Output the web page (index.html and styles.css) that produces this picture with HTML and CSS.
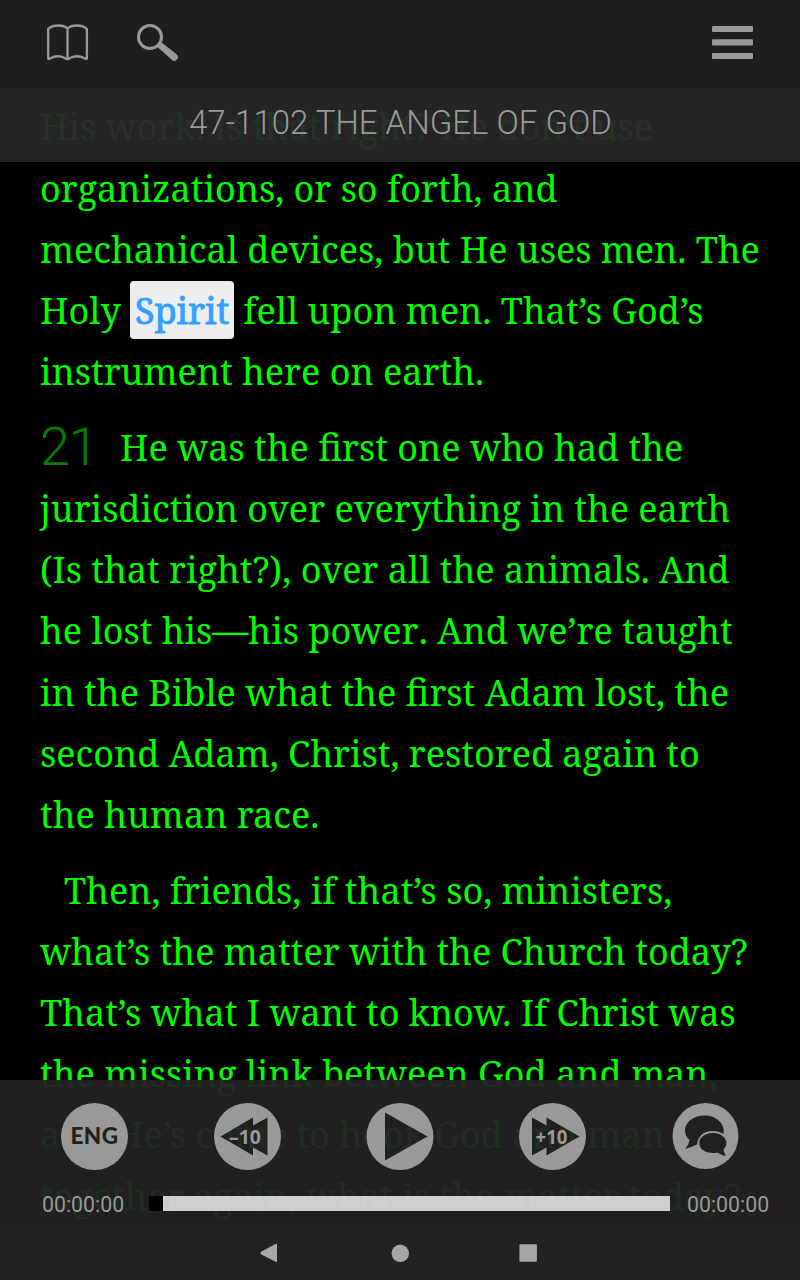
FILE: index.html
```html
<!DOCTYPE html>
<html lang="en">
<head>
    <meta charset="UTF-8">
    <meta name="viewport" content="width=device-width, initial-scale=1.0">
    <title>47-1102 The Angel Of God</title>
    <link rel="stylesheet" href="styles.css">
</head>
<body>
    <main class="reader">
        <p>
            <span class="line">His work. Is that right? He don’t use</span>
            <span class="line">organizations, or so forth, and</span>
            <span class="line">mechanical devices, but He uses men. The</span>
            <span class="line">Holy <mark>Spirit</mark> fell upon men. That’s God’s</span>
            <span class="line">instrument here on earth.</span>
        </p>
        <p>
            <span class="line"><span class="number">21</span>He was the first one who had the</span>
            <span class="line">jurisdiction over everything in the earth</span>
            <span class="line">(Is that right?)<span class="stop">,</span> over all the animals. And</span>
            <span class="line">he lost his—his power<span class="stop">.</span> And we’re taught</span>
            <span class="line">in the Bible what the first Adam lost, the</span>
            <span class="line">second Adam, Christ, restored again to</span>
            <span class="line">the human race.</span>
        </p>
        <p>
            <span class="line indent">Then, friends, if that’s so, ministers,</span>
            <span class="line">what’s the matter with the Church today?</span>
            <span class="line">That’s what I want to know. If Christ was</span>
            <span class="line">the missing link between God and man,</span>
            <span class="line">and He’s come to hook God and man</span>
            <span class="line">together again, what is the matter today?</span>
        </p>
    </main>

    <header class="top">
        <nav class="toolbar">
            <svg class="book" width="42" height="37" viewBox="0 0 42 37">
                <path d="M20.500 4.500C16.500 .6 6 .2 1.200 5V34.500Q2 35.500 3.500 34.200Q10.500 30.500 17.500 33.800Q20.500 36.500 23.500 33.800Q30.500 30.500 37.500 34.200Q39 35.500 39.900 34.500V5C35 .2 24.500 .6 20.500 4.500V34.500"/>
            </svg>
            <svg class="search" width="42" height="38" viewBox="0 0 42 38">
                <circle cx="13" cy="13" r="11.500"/>
                <path d="M20 22.500L24 18L39.600 30.300Q42 32.500 40.500 35Q38 38 35.300 36.300Z"/>
            </svg>
            <svg class="menu" width="41" height="33" viewBox="0 0 41 33">
                <rect width="41" height="6" rx="1"/>
                <rect y="13.300" width="41" height="6.200" rx="1"/>
                <rect y="27" width="41" height="6" rx="1"/>
            </svg>
        </nav>
        <h1 class="title">47-1102 THE ANGEL OF GOD</h1>
    </header>

    <footer class="bottom">
        <div class="player">
            <div class="buttons">
                <div class="lang">ENG</div>
                <svg width="68" height="68" viewBox="0 0 68 68">
                    <path fill-rule="evenodd" d="M34.500 1A33.500 33.500 0 1 1 34.500 68A33.500 33.500 0 1 1 34.500 1ZM7.500 34.500L40 15.500V23.500L54.500 15.500V53.500L40 45.500V53.500Z"/>
                    <text x="16" y="41.500" textLength="32" lengthAdjust="spacingAndGlyphs">–10</text>
                </svg>
                <svg width="68" height="68" viewBox="0 0 68 68">
                    <path fill-rule="evenodd" d="M34 1A33.500 33.500 0 1 1 34 68A33.500 33.500 0 1 1 34 1ZM19 10.500V58.500L61.500 34.500Z"/>
                </svg>
                <svg width="68" height="68" viewBox="0 0 68 68">
                    <path fill-rule="evenodd" d="M34.500 1A33.500 33.500 0 1 1 34.500 68A33.500 33.500 0 1 1 34.500 1ZM61.500 34.500L28.500 15.500V23.500L14 15.500V53.500L28.500 45.500V53.500Z"/>
                    <text x="17.500" y="41.500" textLength="32" lengthAdjust="spacingAndGlyphs">+10</text>
                </svg>
                <svg width="68" height="68" viewBox="0 0 68 68">
                    <circle cx="34.500" cy="34" r="33"/>
                    <path class="bubble" d="M33.500 13.500C22 13.500 14 20.500 14 28.500Q14 34.500 18.500 38Q18 42.500 14 47Q21 45 26 42.500C27 34 33 29 41 29Q48 29 52.500 32C54.500 21 44.500 13.500 33.500 13.500Z"/>
                    <path class="bubble" d="M41.500 31C34 31 28.300 35.500 28.300 41C28.300 48.500 37 52.500 46.500 50.500Q49.500 53 55 54Q53 51 52.500 47.500C59.500 40.500 53.500 31 41.500 31Z"/>
                </svg>
            </div>
            <div class="progress">
                <span class="time">00:00:00</span>
                <div class="track"><div class="thumb"></div></div>
                <span class="time">00:00:00</span>
            </div>
        </div>
        <div class="system">
            <svg width="20" height="20" viewBox="0 0 20 20"><path d="M.5 10Q.5 9 1.500 8.500L15.500 .9Q17 .3 17 1.500V18Q17 19.500 15.500 18.800L1.500 11.500Q.5 11 .5 10Z"/></svg>
            <svg width="18" height="18" viewBox="0 0 18 18"><circle cx="9.300" cy="9.300" r="8.700"/></svg>
            <svg width="18" height="18" viewBox="0 0 18 18"><rect x=".4" y=".3" width="17.500" height="17.500" rx="1"/></svg>
        </div>
    </footer>
</body>
</html>
```

FILE: styles.css
```css
* {
    box-sizing: border-box;
}

body {
    margin: 0;
    height: 1280px;
    overflow: hidden;
    background-color: #000;
    position: relative;
}

.reader {
    padding: 96.4px 0 0 40px;
    color: #00ff00;
    font-family: "Noto Serif", "Droid Serif", "DejaVu Serif Condensed", "DejaVu Serif", serif;
    font-size: 36px;
    line-height: 61.14px;
}

.reader p {
    margin: 0 0 15px;
}

.line {
    display: block;
    height: 61.14px;
    white-space: nowrap;
}

.indent {
    padding-left: 24px;
}

.number {
    display: inline-block;
    width: 80px;
    color: #008000;
    font: 300 54px/50px Roboto, sans-serif;
    letter-spacing: -1.5px;
    vertical-align: -3.5px;
}

/* No kerning before the punctuation */
.stop {
    margin-left: 0.3px;
}

mark {
    padding: 5px 4.7px 4px;
    border-radius: 4px;
    background-color: #ededed;
    color: #33a0ff;
    -webkit-text-stroke: 0.9px #33a0ff;
}

/* Bars above the text */
.top {
    position: absolute;
    top: 0;
    left: 0;
    width: 100%;
}

.toolbar {
    display: flex;
    align-items: flex-start;
    height: 88px;
    padding: 24px 47px;
    background-color: #1e1e1e;
}

.toolbar svg {
    fill: #999;
}

.toolbar .book {
    fill: none;
    stroke: #999;
    stroke-width: 2.3;
}

.search {
    margin-left: 48px;
}

.search circle {
    fill: none;
    stroke: #999;
    stroke-width: 3;
}

.menu {
    margin: 2px 0 0 auto;
}

.title {
    height: 74px;
    margin: 0;
    padding-left: 1px;
    background-color: rgba(39, 39, 39, 0.95);
    color: #999;
    font: 300 33px/69px Roboto, sans-serif;
    text-align: center;
}

.bottom {
    position: absolute;
    bottom: 0;
    left: 0;
    width: 100%;
}

.player {
    height: 146px;
    padding-top: 22px;
    background-color: rgba(34, 34, 34, 0.95);
}

.buttons {
    display: flex;
    justify-content: space-between;
    padding: 0 61px 0 60px;
}

.buttons svg {
    fill: #999;
}

.buttons text {
    font: 700 20px "Open Sans", "Noto Sans", sans-serif;
}

.buttons .bubble {
    fill: #202220;
}

.lang {
    width: 67px;
    height: 67px;
    margin: 1px 0 0 1px;
    border-radius: 50%;
    background-color: #999;
    color: #202220;
    font: 900 22.5px/65px Lato, sans-serif;
    letter-spacing: 0.5px;
    text-align: center;
}

.progress {
    display: flex;
    align-items: center;
    height: 30px;
    margin-top: 18px;
    padding: 0 31px 0 42px;
}

.time {
    width: 82px;
    padding-top: 3px;
    color: #999;
    font: 21.3px/30px Roboto, sans-serif;
}

.track {
    flex: 1;
    height: 15px;
    margin: 0 17px 0 25px;
    background-color: rgba(255, 255, 255, 0.78);
}

.thumb {
    width: 14px;
    height: 15px;
    background-color: #000;
}

.system {
    display: flex;
    justify-content: center;
    align-items: center;
    gap: 110.5px;
    height: 54px;
    padding-right: 3px;
    background-color: #222;
}

.system svg {
    fill: #a6a6a6;
}
```
